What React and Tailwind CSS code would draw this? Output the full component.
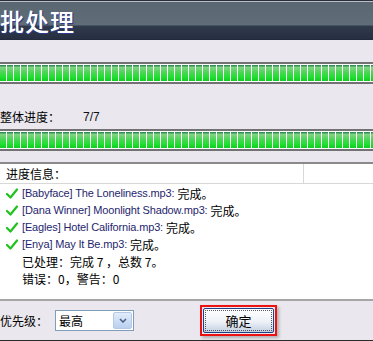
import React from 'react';

const cjk = { fontFamily: '"Noto Sans CJK SC", "Liberation Sans", sans-serif' };
const latin = { fontFamily: '"Liberation Sans", Arial, "Noto Sans CJK SC", sans-serif' };

// green segmented bar
const ProgressBar = () => (
  <div className="h-[22px] border-y-2 border-[#727272] bg-white py-[1px]">
    <div className="h-full bg-[repeating-linear-gradient(90deg,transparent_0px,transparent_6px,#ffffff_6px,#ffffff_7px),linear-gradient(180deg,#2f8f55_0px,#2f8f55_1px,#86d486_2px,#4fd45a_7px,#1fe030_12px,#10cc20_16px)]" />
  </div>
);

const Check = () => (
  <svg width="12" height="11" viewBox="0 0 12 11" className="shrink-0">
    <path d="M1 6 L4.5 9.5 L11 1.5" fill="none" stroke="#1fc21f" strokeWidth="2.2" strokeLinecap="round" strokeLinejoin="round" />
  </svg>
);

const files = [
  '[Babyface] The Loneliness.mp3:',
  '[Dana Winner] Moonlight Shadow.mp3:',
  '[Eagles] Hotel California.mp3:',
  '[Enya] May It Be.mp3:',
];

export default function App() {
  return (
    <div className="w-[373px] h-[341px] overflow-hidden bg-[#eae8ee] flex flex-col text-[12px] text-black" style={cjk}>
      {/* Header */}
      <div className="h-[40px] shrink-0 border-t border-[#2a2f3a] flex flex-col">
        <div className="h-[1px] bg-[#b8bdc6]" />
        <div className="flex-1 pt-[5px] pl-0 bg-[linear-gradient(180deg,#5a6773_0px,#5f6d79_23px,#2f3a4b_24px,#262f41_37px,#1d2435_38px)]">
          <span className="block text-[24px] leading-[28px] text-white font-medium tracking-[1px] [text-shadow:1px_1px_0_#2b3a8a]">批处理</span>
        </div>
      </div>

      <div className="mt-[22px]"><ProgressBar /></div>

      <div className="mt-[24px] h-[18px] flex items-center">
        <span className="w-[83px]">整体进度：</span>
        <span style={latin} className="text-[12px] text-[#111]">7/7</span>
      </div>

      <div className="mt-[3px]"><ProgressBar /></div>

      {/* Info panel */}
      <div className="mt-[11px] bg-white border-t-2 border-[#8a8a8a] h-[137px] flex flex-col">
        <div className="h-[20px] flex border-b border-[#d8d8d8] shrink-0">
          <div className="w-[304px] border-r border-[#d8d8d8] flex items-center pl-[6px]">进度信息：</div>
          <div className="flex-1" />
        </div>
        <div className="pt-[1px] flex flex-col">
          {files.map((name) => (
            <div key={name} className="h-[17px] flex items-center pl-[6px] gap-[4px]">
              <Check />
              <span style={latin} className="text-[11px] tracking-[-0.15px] text-[#1f1f6e] whitespace-nowrap">{name}</span>
              <span className="-ml-[1px]">完成。</span>
            </div>
          ))}
          <div className="h-[17px] flex items-center pl-[22px]">已处理：完成 7 ，总数 7。</div>
          <div className="h-[17px] flex items-center pl-[22px]">错误：0，警告：0</div>
        </div>
      </div>

      {/* Bottom bar */}
      <div className="border-t-2 border-[#a6a6a6] flex-1 flex items-center border-b border-b-[#2a2a2a]">
        <span className="w-[55px]">优先级：</span>
        <div className="w-[79px] h-[21px] border border-[#7f9db9] bg-white flex">
          <span className="flex-1 pl-[3px] leading-[19px]">最高</span>
          <div className="w-[19px] h-[17px] mt-[1px] mr-[1px] rounded-[2px] border border-[#b6c8e4] bg-[linear-gradient(180deg,#e2ecfa,#b9d0ef)] flex items-center justify-center">
            <svg width="8" height="5" viewBox="0 0 8 5"><path d="M1 1 L4 4 L7 1" fill="none" stroke="#4d6185" strokeWidth="1.6" /></svg>
          </div>
        </div>
        <div className="ml-[66px] w-[77px] h-[31px] border-2 border-[#ee1111] p-[1px] shadow-[2px_2px_3px_rgba(0,0,0,0.25)]">
          <div className="w-full h-full border border-[#1d3f86] rounded-[2px] bg-[linear-gradient(180deg,#ffffff,#eef2f8_55%,#c3cfe2)] p-[1px]">
            <div className="w-full h-full border border-dotted border-[#555] flex items-center justify-center text-[13px]">确定</div>
          </div>
        </div>
      </div>
    </div>
  );
}
